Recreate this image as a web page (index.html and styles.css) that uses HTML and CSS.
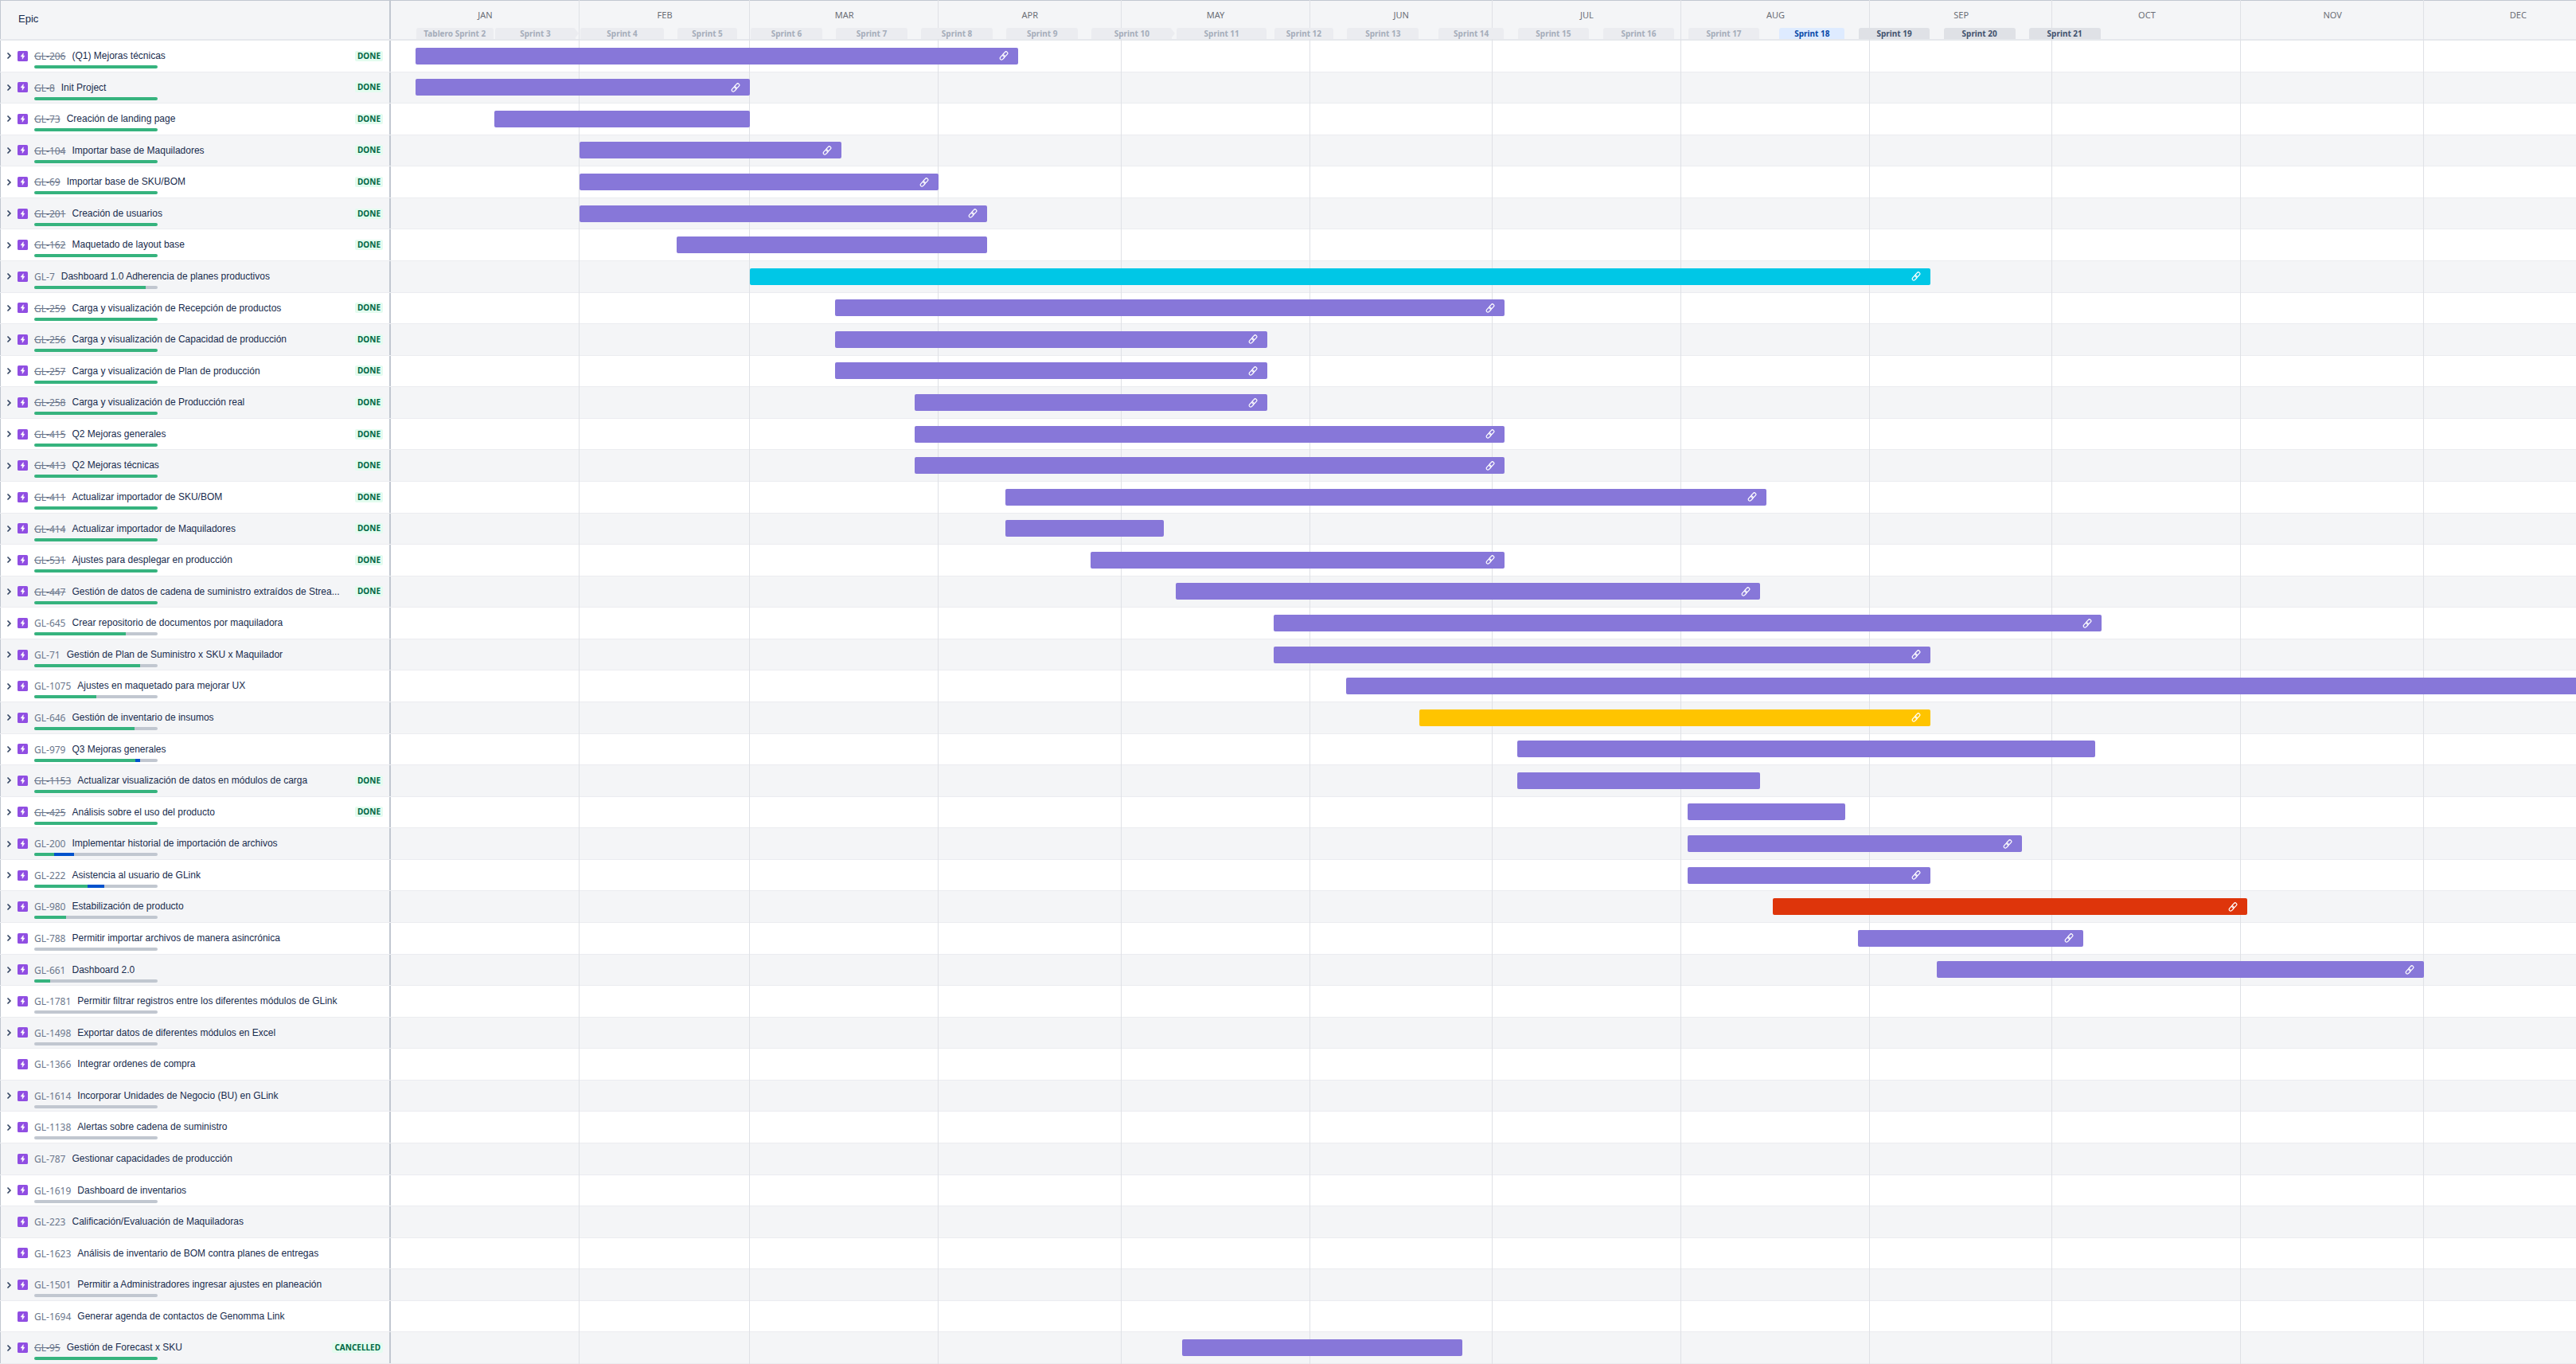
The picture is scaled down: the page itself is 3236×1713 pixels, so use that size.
FILE: index.html
```html
<!DOCTYPE html>
<html lang="es">
<head>
<meta charset="utf-8">
<meta name="viewport" content="width=device-width, initial-scale=1">
<title>Roadmap</title>
<link rel="stylesheet" href="styles.css">
</head>
<body>
<svg class="sprite" aria-hidden="true">
<symbol id="chev" viewBox="0 0 5 8"><path d="M1 1l3 3-3 3" fill="none" stroke="#344563" stroke-width="1.7" stroke-linecap="round" stroke-linejoin="round"/></symbol>
<symbol id="epic" viewBox="0 0 16 16"><rect width="16" height="16" rx="2" fill="#904ee2"/><path d="M9 3.300L5 8.500h2.500v4.200L11 7.500H8.800z" fill="#fff" stroke="#fff" stroke-width=".6" stroke-linejoin="round"/></symbol>
<symbol id="link" viewBox="0 0 12 12"><g fill="none" stroke="#fff" stroke-width="1.200" transform="rotate(-48 6 6)"><rect x="-.2" y="4" width="7" height="4" rx="2"/><rect x="5.200" y="4" width="7" height="4" rx="2"/></g></symbol>
</svg>
<main class="roadmap">
<header class="head">
<h1 class="head-epic">Epic</h1>
<div class="track"><div class="scale">
<ol class="months"><li style="--days:31">JAN</li><li style="--days:28">FEB</li><li style="--days:31">MAR</li><li style="--days:30">APR</li><li style="--days:31">MAY</li><li style="--days:30">JUN</li><li style="--days:31">JUL</li><li style="--days:31">AUG</li><li style="--days:30">SEP</li><li style="--days:31">OCT</li><li style="--days:30">NOV</li><li style="--days:31">DEC</li></ol>
<ol class="sprints">
<li style="--from:4;--to:17"><span>Tablero Sprint 2</span></li>
<li class="more" style="--from:17;--to:31"><span>Sprint 3</span></li>
<li style="--from:31;--to:45"><span>Sprint 4</span></li>
<li style="--from:47;--to:57"><span>Sprint 5</span></li>
<li style="--from:59;--to:71"><span>Sprint 6</span></li>
<li style="--from:73;--to:85"><span>Sprint 7</span></li>
<li style="--from:87;--to:99"><span>Sprint 8</span></li>
<li style="--from:101;--to:113"><span>Sprint 9</span></li>
<li class="more" style="--from:115;--to:129"><span>Sprint 10</span></li>
<li style="--from:129;--to:144"><span>Sprint 11</span></li>
<li style="--from:145;--to:155"><span>Sprint 12</span></li>
<li style="--from:157;--to:169"><span>Sprint 13</span></li>
<li style="--from:172;--to:183"><span>Sprint 14</span></li>
<li style="--from:185;--to:197"><span>Sprint 15</span></li>
<li style="--from:199;--to:211"><span>Sprint 16</span></li>
<li style="--from:213;--to:225"><span>Sprint 17</span></li>
<li class="active" style="--from:228;--to:239"><span>Sprint 18</span></li>
<li class="future" style="--from:241;--to:253"><span>Sprint 19</span></li>
<li class="future" style="--from:255;--to:267"><span>Sprint 20</span></li>
<li class="future" style="--from:269;--to:281"><span>Sprint 21</span></li>
</ol>
</div></div>
</header>
<ul class="rows">
<li class="row"><div class="epic"><button class="toggle" aria-label="Expandir"><svg><use href="#chev"/></svg></button><svg class="type"><use href="#epic"/></svg><div class="info"><p class="line"><a class="key done" href="#GL-206">GL-206</a><span class="title">(Q1) Mejoras técnicas</span></p><div class="progress"><i style="width:100%"></i></div></div><span class="badge">DONE</span></div><div class="track"><div class="scale"><div class="bar" style="--from:4;--to:103"><svg><use href="#link"/></svg></div></div></div></li>
<li class="row"><div class="epic"><button class="toggle" aria-label="Expandir"><svg><use href="#chev"/></svg></button><svg class="type"><use href="#epic"/></svg><div class="info"><p class="line"><a class="key done" href="#GL-8">GL-8</a><span class="title">Init Project</span></p><div class="progress"><i style="width:100%"></i></div></div><span class="badge">DONE</span></div><div class="track"><div class="scale"><div class="bar" style="--from:4;--to:59"><svg><use href="#link"/></svg></div></div></div></li>
<li class="row"><div class="epic"><button class="toggle" aria-label="Expandir"><svg><use href="#chev"/></svg></button><svg class="type"><use href="#epic"/></svg><div class="info"><p class="line"><a class="key done" href="#GL-73">GL-73</a><span class="title">Creación de landing page</span></p><div class="progress"><i style="width:100%"></i></div></div><span class="badge">DONE</span></div><div class="track"><div class="scale"><div class="bar" style="--from:17;--to:59"></div></div></div></li>
<li class="row"><div class="epic"><button class="toggle" aria-label="Expandir"><svg><use href="#chev"/></svg></button><svg class="type"><use href="#epic"/></svg><div class="info"><p class="line"><a class="key done" href="#GL-104">GL-104</a><span class="title">Importar base de Maquiladores</span></p><div class="progress"><i style="width:100%"></i></div></div><span class="badge">DONE</span></div><div class="track"><div class="scale"><div class="bar" style="--from:31;--to:74"><svg><use href="#link"/></svg></div></div></div></li>
<li class="row"><div class="epic"><button class="toggle" aria-label="Expandir"><svg><use href="#chev"/></svg></button><svg class="type"><use href="#epic"/></svg><div class="info"><p class="line"><a class="key done" href="#GL-69">GL-69</a><span class="title">Importar base de SKU/BOM</span></p><div class="progress"><i style="width:100%"></i></div></div><span class="badge">DONE</span></div><div class="track"><div class="scale"><div class="bar" style="--from:31;--to:90"><svg><use href="#link"/></svg></div></div></div></li>
<li class="row"><div class="epic"><button class="toggle" aria-label="Expandir"><svg><use href="#chev"/></svg></button><svg class="type"><use href="#epic"/></svg><div class="info"><p class="line"><a class="key done" href="#GL-201">GL-201</a><span class="title">Creación de usuarios</span></p><div class="progress"><i style="width:100%"></i></div></div><span class="badge">DONE</span></div><div class="track"><div class="scale"><div class="bar" style="--from:31;--to:98"><svg><use href="#link"/></svg></div></div></div></li>
<li class="row"><div class="epic"><button class="toggle" aria-label="Expandir"><svg><use href="#chev"/></svg></button><svg class="type"><use href="#epic"/></svg><div class="info"><p class="line"><a class="key done" href="#GL-162">GL-162</a><span class="title">Maquetado de layout base</span></p><div class="progress"><i style="width:100%"></i></div></div><span class="badge">DONE</span></div><div class="track"><div class="scale"><div class="bar" style="--from:47;--to:98"></div></div></div></li>
<li class="row"><div class="epic"><button class="toggle" aria-label="Expandir"><svg><use href="#chev"/></svg></button><svg class="type"><use href="#epic"/></svg><div class="info"><p class="line"><a class="key" href="#GL-7">GL-7</a><span class="title">Dashboard 1.0 Adherencia de planes productivos</span></p><div class="progress"><i style="width:90%"></i></div></div></div><div class="track"><div class="scale"><div class="bar teal" style="--from:59;--to:253"><svg><use href="#link"/></svg></div></div></div></li>
<li class="row"><div class="epic"><button class="toggle" aria-label="Expandir"><svg><use href="#chev"/></svg></button><svg class="type"><use href="#epic"/></svg><div class="info"><p class="line"><a class="key done" href="#GL-259">GL-259</a><span class="title">Carga y visualización de Recepción de productos</span></p><div class="progress"><i style="width:100%"></i></div></div><span class="badge">DONE</span></div><div class="track"><div class="scale"><div class="bar" style="--from:73;--to:183"><svg><use href="#link"/></svg></div></div></div></li>
<li class="row"><div class="epic"><button class="toggle" aria-label="Expandir"><svg><use href="#chev"/></svg></button><svg class="type"><use href="#epic"/></svg><div class="info"><p class="line"><a class="key done" href="#GL-256">GL-256</a><span class="title">Carga y visualización de Capacidad de producción</span></p><div class="progress"><i style="width:100%"></i></div></div><span class="badge">DONE</span></div><div class="track"><div class="scale"><div class="bar" style="--from:73;--to:144"><svg><use href="#link"/></svg></div></div></div></li>
<li class="row"><div class="epic"><button class="toggle" aria-label="Expandir"><svg><use href="#chev"/></svg></button><svg class="type"><use href="#epic"/></svg><div class="info"><p class="line"><a class="key done" href="#GL-257">GL-257</a><span class="title">Carga y visualización de Plan de producción</span></p><div class="progress"><i style="width:100%"></i></div></div><span class="badge">DONE</span></div><div class="track"><div class="scale"><div class="bar" style="--from:73;--to:144"><svg><use href="#link"/></svg></div></div></div></li>
<li class="row"><div class="epic"><button class="toggle" aria-label="Expandir"><svg><use href="#chev"/></svg></button><svg class="type"><use href="#epic"/></svg><div class="info"><p class="line"><a class="key done" href="#GL-258">GL-258</a><span class="title">Carga y visualización de Producción real</span></p><div class="progress"><i style="width:100%"></i></div></div><span class="badge">DONE</span></div><div class="track"><div class="scale"><div class="bar" style="--from:86;--to:144"><svg><use href="#link"/></svg></div></div></div></li>
<li class="row"><div class="epic"><button class="toggle" aria-label="Expandir"><svg><use href="#chev"/></svg></button><svg class="type"><use href="#epic"/></svg><div class="info"><p class="line"><a class="key done" href="#GL-415">GL-415</a><span class="title">Q2 Mejoras generales</span></p><div class="progress"><i style="width:100%"></i></div></div><span class="badge">DONE</span></div><div class="track"><div class="scale"><div class="bar" style="--from:86;--to:183"><svg><use href="#link"/></svg></div></div></div></li>
<li class="row"><div class="epic"><button class="toggle" aria-label="Expandir"><svg><use href="#chev"/></svg></button><svg class="type"><use href="#epic"/></svg><div class="info"><p class="line"><a class="key done" href="#GL-413">GL-413</a><span class="title">Q2 Mejoras técnicas</span></p><div class="progress"><i style="width:100%"></i></div></div><span class="badge">DONE</span></div><div class="track"><div class="scale"><div class="bar" style="--from:86;--to:183"><svg><use href="#link"/></svg></div></div></div></li>
<li class="row"><div class="epic"><button class="toggle" aria-label="Expandir"><svg><use href="#chev"/></svg></button><svg class="type"><use href="#epic"/></svg><div class="info"><p class="line"><a class="key done" href="#GL-411">GL-411</a><span class="title">Actualizar importador de SKU/BOM</span></p><div class="progress"><i style="width:100%"></i></div></div><span class="badge">DONE</span></div><div class="track"><div class="scale"><div class="bar" style="--from:101;--to:226"><svg><use href="#link"/></svg></div></div></div></li>
<li class="row"><div class="epic"><button class="toggle" aria-label="Expandir"><svg><use href="#chev"/></svg></button><svg class="type"><use href="#epic"/></svg><div class="info"><p class="line"><a class="key done" href="#GL-414">GL-414</a><span class="title">Actualizar importador de Maquiladores</span></p><div class="progress"><i style="width:100%"></i></div></div><span class="badge">DONE</span></div><div class="track"><div class="scale"><div class="bar" style="--from:101;--to:127"></div></div></div></li>
<li class="row"><div class="epic"><button class="toggle" aria-label="Expandir"><svg><use href="#chev"/></svg></button><svg class="type"><use href="#epic"/></svg><div class="info"><p class="line"><a class="key done" href="#GL-531">GL-531</a><span class="title">Ajustes para desplegar en producción</span></p><div class="progress"><i style="width:100%"></i></div></div><span class="badge">DONE</span></div><div class="track"><div class="scale"><div class="bar" style="--from:115;--to:183"><svg><use href="#link"/></svg></div></div></div></li>
<li class="row"><div class="epic"><button class="toggle" aria-label="Expandir"><svg><use href="#chev"/></svg></button><svg class="type"><use href="#epic"/></svg><div class="info"><p class="line"><a class="key done" href="#GL-447">GL-447</a><span class="title">Gestión de datos de cadena de suministro extraídos de Strea...</span></p><div class="progress"><i style="width:100%"></i></div></div><span class="badge">DONE</span></div><div class="track"><div class="scale"><div class="bar" style="--from:129;--to:225"><svg><use href="#link"/></svg></div></div></div></li>
<li class="row"><div class="epic"><button class="toggle" aria-label="Expandir"><svg><use href="#chev"/></svg></button><svg class="type"><use href="#epic"/></svg><div class="info"><p class="line"><a class="key" href="#GL-645">GL-645</a><span class="title">Crear repositorio de documentos por maquiladora</span></p><div class="progress"><i style="width:74%"></i></div></div></div><div class="track"><div class="scale"><div class="bar" style="--from:145;--to:281"><svg><use href="#link"/></svg></div></div></div></li>
<li class="row"><div class="epic"><button class="toggle" aria-label="Expandir"><svg><use href="#chev"/></svg></button><svg class="type"><use href="#epic"/></svg><div class="info"><p class="line"><a class="key" href="#GL-71">GL-71</a><span class="title">Gestión de Plan de Suministro x SKU x Maquilador</span></p><div class="progress"><i style="width:86%"></i></div></div></div><div class="track"><div class="scale"><div class="bar" style="--from:145;--to:253"><svg><use href="#link"/></svg></div></div></div></li>
<li class="row"><div class="epic"><button class="toggle" aria-label="Expandir"><svg><use href="#chev"/></svg></button><svg class="type"><use href="#epic"/></svg><div class="info"><p class="line"><a class="key" href="#GL-1075">GL-1075</a><span class="title">Ajustes en maquetado para mejorar UX</span></p><div class="progress"><i style="width:50%"></i></div></div></div><div class="track"><div class="scale"><div class="bar" style="--from:157;--to:365"></div></div></div></li>
<li class="row"><div class="epic"><button class="toggle" aria-label="Expandir"><svg><use href="#chev"/></svg></button><svg class="type"><use href="#epic"/></svg><div class="info"><p class="line"><a class="key" href="#GL-646">GL-646</a><span class="title">Gestión de inventario de insumos</span></p><div class="progress"><i style="width:81%"></i></div></div></div><div class="track"><div class="scale"><div class="bar yellow" style="--from:169;--to:253"><svg><use href="#link"/></svg></div></div></div></li>
<li class="row"><div class="epic"><button class="toggle" aria-label="Expandir"><svg><use href="#chev"/></svg></button><svg class="type"><use href="#epic"/></svg><div class="info"><p class="line"><a class="key" href="#GL-979">GL-979</a><span class="title">Q3 Mejoras generales</span></p><div class="progress"><i style="width:82%"></i><b style="width:4%"></b></div></div></div><div class="track"><div class="scale"><div class="bar" style="--from:185;--to:280"></div></div></div></li>
<li class="row"><div class="epic"><button class="toggle" aria-label="Expandir"><svg><use href="#chev"/></svg></button><svg class="type"><use href="#epic"/></svg><div class="info"><p class="line"><a class="key done" href="#GL-1153">GL-1153</a><span class="title">Actualizar visualización de datos en módulos de carga</span></p><div class="progress"><i style="width:100%"></i></div></div><span class="badge">DONE</span></div><div class="track"><div class="scale"><div class="bar" style="--from:185;--to:225"></div></div></div></li>
<li class="row"><div class="epic"><button class="toggle" aria-label="Expandir"><svg><use href="#chev"/></svg></button><svg class="type"><use href="#epic"/></svg><div class="info"><p class="line"><a class="key done" href="#GL-425">GL-425</a><span class="title">Análisis sobre el uso del producto</span></p><div class="progress"><i style="width:100%"></i></div></div><span class="badge">DONE</span></div><div class="track"><div class="scale"><div class="bar" style="--from:213;--to:239"></div></div></div></li>
<li class="row"><div class="epic"><button class="toggle" aria-label="Expandir"><svg><use href="#chev"/></svg></button><svg class="type"><use href="#epic"/></svg><div class="info"><p class="line"><a class="key" href="#GL-200">GL-200</a><span class="title">Implementar historial de importación de archivos</span></p><div class="progress"><i style="width:16%"></i><b style="width:16%"></b></div></div></div><div class="track"><div class="scale"><div class="bar" style="--from:213;--to:268"><svg><use href="#link"/></svg></div></div></div></li>
<li class="row"><div class="epic"><button class="toggle" aria-label="Expandir"><svg><use href="#chev"/></svg></button><svg class="type"><use href="#epic"/></svg><div class="info"><p class="line"><a class="key" href="#GL-222">GL-222</a><span class="title">Asistencia al usuario de GLink</span></p><div class="progress"><i style="width:43%"></i><b style="width:14%"></b></div></div></div><div class="track"><div class="scale"><div class="bar" style="--from:213;--to:253"><svg><use href="#link"/></svg></div></div></div></li>
<li class="row"><div class="epic"><button class="toggle" aria-label="Expandir"><svg><use href="#chev"/></svg></button><svg class="type"><use href="#epic"/></svg><div class="info"><p class="line"><a class="key" href="#GL-980">GL-980</a><span class="title">Estabilización de producto</span></p><div class="progress"><i style="width:26%"></i></div></div></div><div class="track"><div class="scale"><div class="bar red" style="--from:227;--to:305"><svg><use href="#link"/></svg></div></div></div></li>
<li class="row"><div class="epic"><button class="toggle" aria-label="Expandir"><svg><use href="#chev"/></svg></button><svg class="type"><use href="#epic"/></svg><div class="info"><p class="line"><a class="key" href="#GL-788">GL-788</a><span class="title">Permitir importar archivos de manera asincrónica</span></p><div class="progress"></div></div></div><div class="track"><div class="scale"><div class="bar" style="--from:241;--to:278"><svg><use href="#link"/></svg></div></div></div></li>
<li class="row"><div class="epic"><button class="toggle" aria-label="Expandir"><svg><use href="#chev"/></svg></button><svg class="type"><use href="#epic"/></svg><div class="info"><p class="line"><a class="key" href="#GL-661">GL-661</a><span class="title">Dashboard 2.0</span></p><div class="progress"><i style="width:13%"></i></div></div></div><div class="track"><div class="scale"><div class="bar" style="--from:254;--to:334"><svg><use href="#link"/></svg></div></div></div></li>
<li class="row"><div class="epic"><button class="toggle" aria-label="Expandir"><svg><use href="#chev"/></svg></button><svg class="type"><use href="#epic"/></svg><div class="info"><p class="line"><a class="key" href="#GL-1781">GL-1781</a><span class="title">Permitir filtrar registros entre los diferentes módulos de GLink</span></p><div class="progress"></div></div></div></li>
<li class="row"><div class="epic"><button class="toggle" aria-label="Expandir"><svg><use href="#chev"/></svg></button><svg class="type"><use href="#epic"/></svg><div class="info"><p class="line"><a class="key" href="#GL-1498">GL-1498</a><span class="title">Exportar datos de diferentes módulos en Excel</span></p><div class="progress"></div></div></div></li>
<li class="row"><div class="epic leaf"><svg class="type"><use href="#epic"/></svg><div class="info"><p class="line"><a class="key" href="#GL-1366">GL-1366</a><span class="title">Integrar ordenes de compra</span></p></div></div></li>
<li class="row"><div class="epic"><button class="toggle" aria-label="Expandir"><svg><use href="#chev"/></svg></button><svg class="type"><use href="#epic"/></svg><div class="info"><p class="line"><a class="key" href="#GL-1614">GL-1614</a><span class="title">Incorporar Unidades de Negocio (BU) en GLink</span></p><div class="progress"></div></div></div></li>
<li class="row"><div class="epic"><button class="toggle" aria-label="Expandir"><svg><use href="#chev"/></svg></button><svg class="type"><use href="#epic"/></svg><div class="info"><p class="line"><a class="key" href="#GL-1138">GL-1138</a><span class="title">Alertas sobre cadena de suministro</span></p><div class="progress"></div></div></div></li>
<li class="row"><div class="epic leaf"><svg class="type"><use href="#epic"/></svg><div class="info"><p class="line"><a class="key" href="#GL-787">GL-787</a><span class="title">Gestionar capacidades de producción</span></p></div></div></li>
<li class="row"><div class="epic"><button class="toggle" aria-label="Expandir"><svg><use href="#chev"/></svg></button><svg class="type"><use href="#epic"/></svg><div class="info"><p class="line"><a class="key" href="#GL-1619">GL-1619</a><span class="title">Dashboard de inventarios</span></p><div class="progress"></div></div></div></li>
<li class="row"><div class="epic leaf"><svg class="type"><use href="#epic"/></svg><div class="info"><p class="line"><a class="key" href="#GL-223">GL-223</a><span class="title">Calificación/Evaluación de Maquiladoras</span></p></div></div></li>
<li class="row"><div class="epic leaf"><svg class="type"><use href="#epic"/></svg><div class="info"><p class="line"><a class="key" href="#GL-1623">GL-1623</a><span class="title">Análisis de inventario de BOM contra planes de entregas</span></p></div></div></li>
<li class="row"><div class="epic"><button class="toggle" aria-label="Expandir"><svg><use href="#chev"/></svg></button><svg class="type"><use href="#epic"/></svg><div class="info"><p class="line"><a class="key" href="#GL-1501">GL-1501</a><span class="title">Permitir a Administradores ingresar ajustes en planeación</span></p><div class="progress"></div></div></div></li>
<li class="row"><div class="epic leaf"><svg class="type"><use href="#epic"/></svg><div class="info"><p class="line"><a class="key" href="#GL-1694">GL-1694</a><span class="title">Generar agenda de contactos de Genomma Link</span></p></div></div></li>
<li class="row"><div class="epic"><button class="toggle" aria-label="Expandir"><svg><use href="#chev"/></svg></button><svg class="type"><use href="#epic"/></svg><div class="info"><p class="line"><a class="key done" href="#GL-95">GL-95</a><span class="title">Gestión de Forecast x SKU</span></p><div class="progress"><i style="width:100%"></i></div></div><span class="badge">CANCELLED</span></div><div class="track"><div class="scale"><div class="bar" style="--from:130;--to:176"></div></div></div></li>
</ul>
<div class="gridlines" aria-hidden="true"><div class="scale"><div class="months"><span style="--days:31"></span><span style="--days:28"></span><span style="--days:31"></span><span style="--days:30"></span><span style="--days:31"></span><span style="--days:30"></span><span style="--days:31"></span><span style="--days:31"></span><span style="--days:30"></span><span style="--days:31"></span><span style="--days:30"></span><span style="--days:31"></span></div></div></div>
</main>
</body>
</html>
```
FILE: styles.css
```css
:root {
  --side: 491px;
  --purple: #8777d9;
}

* {
  box-sizing: border-box;
}

body,
h1,
p,
ol,
ul {
  margin: 0;
  padding: 0;
}

ol,
ul {
  list-style: none;
}

body {
  font-family: "Noto Sans", "Open Sans", sans-serif;
  color: #172b4d;
  background: #fff;
}

.sprite {
  display: none;
}

.roadmap {
  position: relative;
  display: grid;
  grid-template-rows: auto 1fr;
  min-height: 100vh;
  overflow: hidden;
}

/* Header */
.head {
  display: flex;
  height: 51px;
  background: #f4f5f7;
  border-top: 1px solid #c1c7d0;
  border-bottom: 2px solid #e6e8ec;
}

.head-epic {
  flex: none;
  width: var(--side);
  padding: 15px 22px;
  border-left: 1px solid #c1c7d0;
  border-right: 2px solid #c1c7d0;
  font: 400 13px/16px "Liberation Sans", Arial, sans-serif;
}

/* The timeline shows 359 of the year's 365 days */
.track {
  flex: 1;
  min-width: 0;
  overflow: hidden;
}

.scale {
  width: calc(365 / 359 * 100%);
  height: 100%;
}

.months {
  display: flex;
}

.months > * {
  flex: var(--days) 1 0;
  min-width: 0;
}

.head .months {
  padding-top: 10px;
  font-size: 11px;
  line-height: 16px;
  text-align: center;
  color: #6b6e76;
}

.sprints {
  display: grid;
  padding-top: 8px;
}

.sprints li {
  position: relative;
  z-index: 1;
  grid-area: 1 / 1;
  margin-left: calc(var(--from) / 365 * 100%);
  width: calc((var(--to) - var(--from)) / 365 * 100%);
  padding: 0 1px;
  font-size: 10px;
  font-weight: 700;
  line-height: 14px;
  text-align: center;
  color: #a5adba;
}

.sprints span {
  display: block;
  border-radius: 3px 3px 0 0;
  background: #ebecf0;
}

.sprints .more {
  padding-right: 5px;
}

.sprints .more::after {
  content: "";
  position: absolute;
  top: 2px;
  right: 1px;
  border: 5px solid transparent;
  border-left: 4px solid #ebecf0;
  border-right: 0;
}

.sprints .active span {
  color: #0747a6;
  background: #deebff;
}

.sprints .future span {
  color: #42526e;
  background: #dfe1e6;
}

/* Rows */
.rows {
  display: grid;
  grid-auto-rows: 1fr;
}

.row {
  display: flex;
  min-height: 39px;
  border-bottom: 1px solid #ebecf0;
}

.row:nth-child(even) {
  background: #f4f5f7;
}

.epic {
  flex: none;
  display: flex;
  align-items: center;
  width: var(--side);
  padding: 0 8px 0 4px;
  border-left: 1px solid #c1c7d0;
  border-right: 2px solid #c1c7d0;
}

.epic.leaf {
  padding-left: 21px;
}

.toggle {
  display: flex;
  width: 13px;
  height: 16px;
  margin-right: 4px;
  padding: 4px;
  border: 0;
  background: none;
  cursor: pointer;
}

.toggle svg {
  width: 5px;
  height: 8px;
}

.type {
  flex: none;
  width: 13px;
  height: 13px;
}

.info {
  flex: 1;
  align-self: flex-start;
  min-width: 0;
  padding: 11px 4px 0 8px;
}

.line {
  display: flex;
  align-items: flex-start;
  gap: 8px;
  height: 16px;
}

.key {
  font-size: 12px;
  line-height: 18px;
  color: #6b778c;
  text-decoration: none;
}

.key.done {
  text-decoration: line-through;
}

.title {
  font-family: "Liberation Sans", Arial, sans-serif;
  font-size: 12px;
  line-height: 17px;
  white-space: nowrap;
}

.progress {
  display: flex;
  width: 155px;
  height: 4px;
  margin-top: 4px;
  border-radius: 2px;
  overflow: hidden;
  background: #c1c7d0;
}

.progress i {
  background: #36b37e;
}

.progress b {
  background: #0052cc;
}

.badge {
  flex: none;
  padding: 0 3px;
  border-radius: 2px;
  font-size: 10px;
  font-weight: 700;
  line-height: 13px;
  color: #006644;
  background: #e3fcef;
}

.row .scale {
  display: flex;
  align-items: center;
}

.bar {
  position: relative;
  z-index: 1;
  display: flex;
  align-items: center;
  justify-content: flex-end;
  width: calc((var(--to) - var(--from)) / 365 * 100%);
  height: 21px;
  margin-left: calc(var(--from) / 365 * 100%);
  padding-right: 12px;
  border-radius: 2px;
  background: var(--purple);
}

.bar svg {
  width: 12px;
  height: 12px;
}

.bar.teal {
  background: #00c7e6;
}

.bar.yellow {
  background: #ffc400;
}

.bar.red {
  background: #de350b;
}

/* Month lines drawn across header and rows, below the bars */
.gridlines {
  position: absolute;
  inset: 0 0 0 var(--side);
  overflow: hidden;
  pointer-events: none;
}

.gridlines .months {
  height: 100%;
}

.gridlines .scale span {
  border-right: 1px solid #dfe1e6;
}
```
